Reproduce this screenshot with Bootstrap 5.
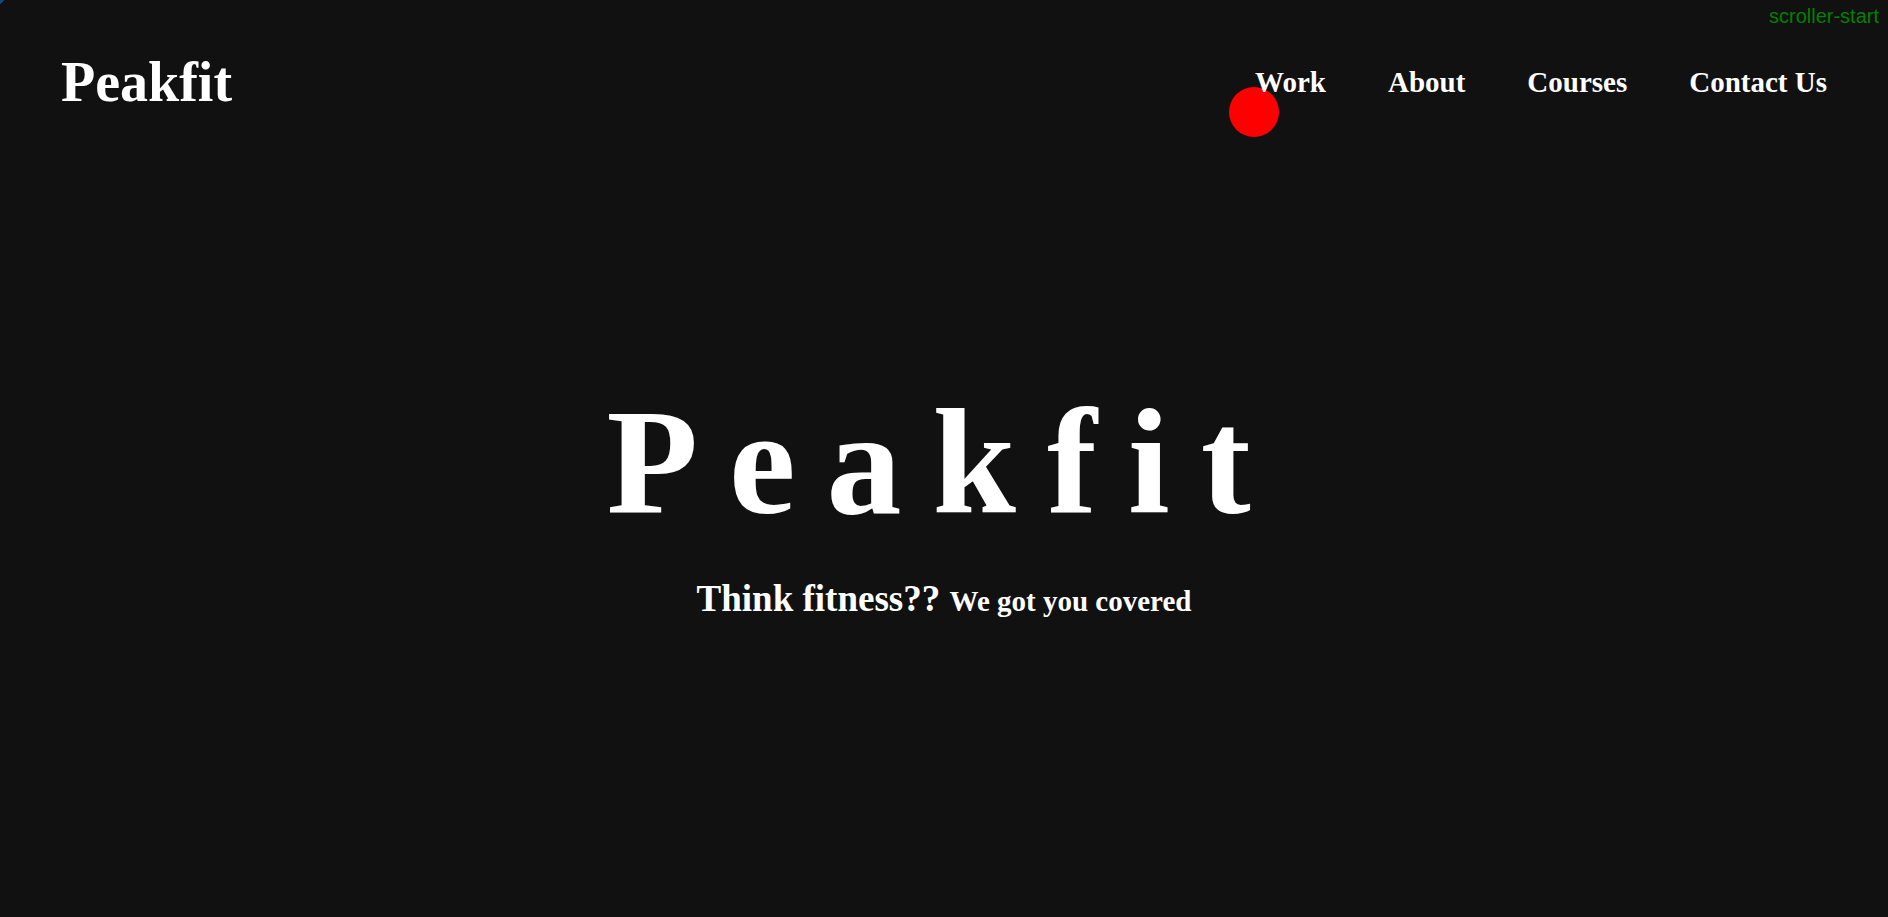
<!DOCTYPE html>
<html lang="en">
<head>
<meta charset="utf-8">
<meta name="viewport" content="width=device-width, initial-scale=1">
<title>Peakfit</title>
<link href="https://cdn.jsdelivr.net/npm/bootstrap@5.3.0/dist/css/bootstrap.min.css" rel="stylesheet">
<style>
  body { background: #111; color: #fff; font-family: "Liberation Serif", "Times New Roman", serif; font-weight: 700; }
  .site-header { padding: 48px 61px; }
  .navbar-brand.site-brand { font-size: 56px; line-height: 68px; }
  .site-links { gap: 62px; }
  .site-links .nav-link { font-size: 29px; line-height: 32px; color: #fff; }
  .hero { padding-top: 212px; }
  .hero-title { font-size: 150px; line-height: 172px; letter-spacing: 31px; font-weight: 700; margin-bottom: 29px; }
  .hero-lead { font-size: 37px; line-height: 44px; }
  .hero-note { font-size: 29px; }
  .scroll-marker { top: 0; right: 9px; font: 400 20px/32px "Liberation Sans", Arial, sans-serif; color: green; }
  .cursor-dot { left: 1229px; top: 87px; width: 50px; height: 50px; background: red; }
  .window-corner { top: 0; left: 0; width: 4px; height: 4px; background: linear-gradient(135deg, #0a4a80 50%, transparent 50%); }
</style>
</head>
<body class="vh-100 overflow-hidden d-flex flex-column position-relative">
  <span class="window-corner position-absolute"></span>
  <span class="scroll-marker position-absolute">scroller-start</span>
  <span class="cursor-dot position-absolute rounded-circle"></span>
  <header class="site-header d-flex justify-content-between align-items-center position-relative">
    <a class="navbar-brand site-brand text-white p-0 m-0" href="#">Peakfit</a>
    <nav class="nav site-links" aria-label="Main">
      <a class="nav-link p-0" href="#work">Work</a>
      <a class="nav-link p-0" href="#about">About</a>
      <a class="nav-link p-0" href="#courses">Courses</a>
      <a class="nav-link p-0" href="#contact">Contact Us</a>
    </nav>
  </header>
  <main class="hero flex-grow-1 text-center">
    <h1 class="hero-title">Peakfit</h1>
    <p class="hero-lead m-0">Think fitness?? <span class="hero-note">We got you covered</span></p>
  </main>
<script src="https://cdn.jsdelivr.net/npm/bootstrap@5.3.0/dist/js/bootstrap.bundle.min.js"></script>
</body>
</html>
